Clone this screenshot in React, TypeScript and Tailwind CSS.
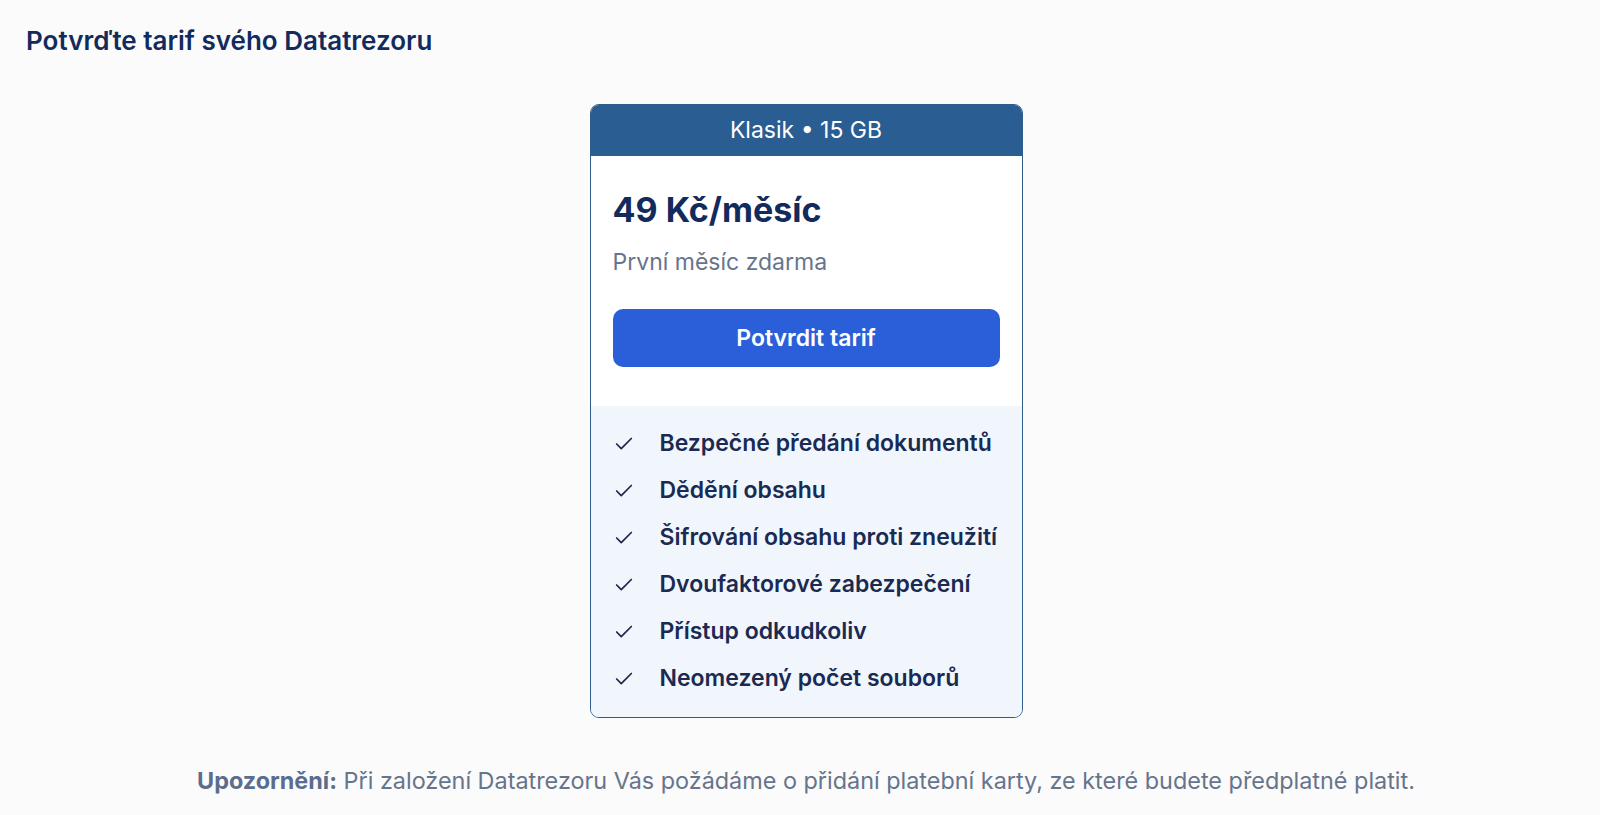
import React from "react";

const features = [
  "Bezpečné předání dokumentů",
  "Dědění obsahu",
  "Šifrování obsahu proti zneužití",
  "Dvoufaktorové zabezpečení",
  "Přístup odkudkoliv",
  "Neomezený počet souborů",
];

function Check() {
  return (
    <svg width="22" height="22" viewBox="0 0 24 24" fill="none" stroke="#1e2a4d" strokeWidth="1.9" strokeLinecap="round" strokeLinejoin="round">
      <path d="M20 6 9 17l-5-5" />
    </svg>
  );
}

export default function App() {
  return (
    <div className="min-h-[815px] w-full bg-[#fbfbfb] font-['Inter',sans-serif] flex flex-col">
      <h1 className="pl-[26px] pt-[25px] text-[26px] leading-[32px] font-semibold text-[#132a5c]">
        Potvrďte tarif svého Datatrezoru
      </h1>
      <div className="flex flex-col items-center pl-[12px]">
        <div className="mt-[47px] w-[433px] rounded-[9px] border border-[#2e5d8c] overflow-hidden bg-white">
          <div className="h-[51px] bg-[#2a5d91] flex items-center justify-center text-white text-[23px]">
            Klasik • 15 GB
          </div>
          <div className="px-[22px] pt-[34px] pb-[39px]">
            <div className="text-[34px] leading-[40px] font-bold text-[#132a5c]">49 Kč/měsíc</div>
            <div className="mt-[17px] text-[23px] leading-[30px] text-[#66748c]">První měsíc zdarma</div>
            <button className="mt-[32px] w-full h-[58px] rounded-[10px] bg-[#2b5fd9] text-white text-[23px] font-semibold">
              Potvrdit tarif
            </button>
          </div>
          <ul className="bg-[#f1f6fc] pt-[14px] pb-[15px] pl-[22px] pr-[10px] flex flex-col">
            {features.map((f) => (
              <li key={f} className="h-[47px] flex items-center gap-[25px]">
                <Check />
                <span className="text-[23px] font-semibold text-[#1a2a52] whitespace-nowrap">{f}</span>
              </li>
            ))}
          </ul>
        </div>
        <p className="mt-[48px] text-center text-[23.4px] leading-[30px] text-[#66748c]">
          <span className="font-bold text-[#5a6d8f]">Upozornění:</span> Při založení Datatrezoru Vás požádáme o přidání platební karty, ze které budete předplatné platit.
        </p>
      </div>
    </div>
  );
}
